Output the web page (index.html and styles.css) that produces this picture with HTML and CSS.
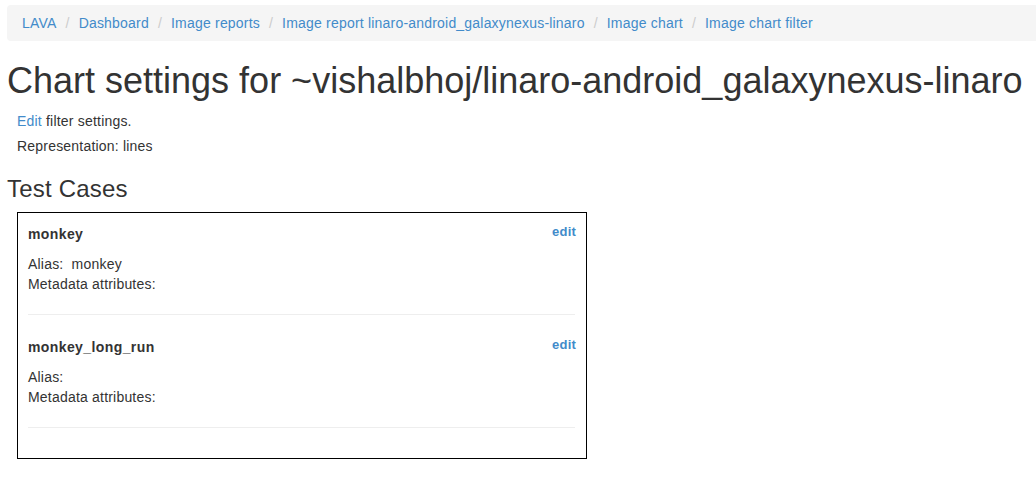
FILE: index.html
```html
<!DOCTYPE html>
<html>
<head>
<meta charset="utf-8">
<title>Chart settings</title>
<link rel="stylesheet" href="styles.css">
</head>
<body>
<div class="page">
  <ol class="breadcrumb">
    <li><a href="#">LAVA</a></li>
    <li><a href="#">Dashboard</a></li>
    <li><a href="#">Image reports</a></li>
    <li><a href="#">Image report linaro-android_galaxynexus-linaro</a></li>
    <li><a href="#">Image chart</a></li>
    <li><a href="#">Image chart filter</a></li>
  </ol>
  <h1 class="title">Chart settings for ~vishalbhoj/linaro-android_galaxynexus-linaro</h1>
  <p class="info"><a href="#">Edit</a> filter settings.</p>
  <p class="info">Representation: lines</p>
  <h3 class="section">Test Cases</h3>
  <div class="cases">
    <div class="case">
      <div class="case-head"><span class="case-name">monkey</span><a class="case-edit" href="#">edit</a></div>
      <div class="case-line">Alias:&nbsp; monkey</div>
      <div class="case-line">Metadata attributes:</div>
      <hr class="sep">
    </div>
    <div class="case">
      <div class="case-head"><span class="case-name">monkey_long_run</span><a class="case-edit" href="#">edit</a></div>
      <div class="case-line">Alias:</div>
      <div class="case-line">Metadata attributes:</div>
      <hr class="sep">
    </div>
  </div>
</div>
</body>
</html>
```
FILE: styles.css
```css
html, body {
  margin: 0;
  padding: 0;
  background: #fff;
}
body {
  font-family: "Liberation Sans", Arial, sans-serif;
  font-size: 14px;
  line-height: 20px;
  color: #333;
  letter-spacing: 0.2px;
}
a {
  color: #428bca;
  text-decoration: none;
}
.page {
  padding: 5px 0 0 7px;
}
.breadcrumb {
  list-style: none;
  margin: 0 0 20px 0;
  padding: 8px 15px;
  background: #f5f5f5;
  border-radius: 4px 0 0 4px;
  display: flex;
  flex-wrap: nowrap;
  white-space: nowrap;
}
.breadcrumb li + li::before {
  content: "/";
  color: #ccc;
  padding: 0 9px 0 9px;
}
.title {
  font-size: 36px;
  font-weight: 400;
  line-height: 39.6px;
  margin: 0 0 10px 0;
  color: #333;
  white-space: nowrap;
  letter-spacing: 0;
}
.info {
  margin: 0 0 5px 10px;
}
.section {
  font-size: 24px;
  font-weight: 400;
  line-height: 26.4px;
  margin: 20px 0 10px 0;
}
.cases {
  margin-left: 10px;
  width: 570px;
  box-sizing: border-box;
  border: 1px solid #000;
  padding: 10px 11px 10px 10px;
}
.case-head {
  display: flex;
  justify-content: space-between;
  align-items: flex-start;
  margin-bottom: 10px;
}
.case-name {
  font-weight: 700;
  line-height: 20px;
  padding-top: 1px;
  letter-spacing: 0.4px;
}
.case-edit {
  font-size: 13px;
  font-weight: 700;
  line-height: 16px;
  margin-top: 1px;
  margin-right: -1px;
}
.sep {
  border: 0;
  border-top: 1px solid #eee;
  margin: 20px 0 20.5px 0;
  height: 0;
}
```
